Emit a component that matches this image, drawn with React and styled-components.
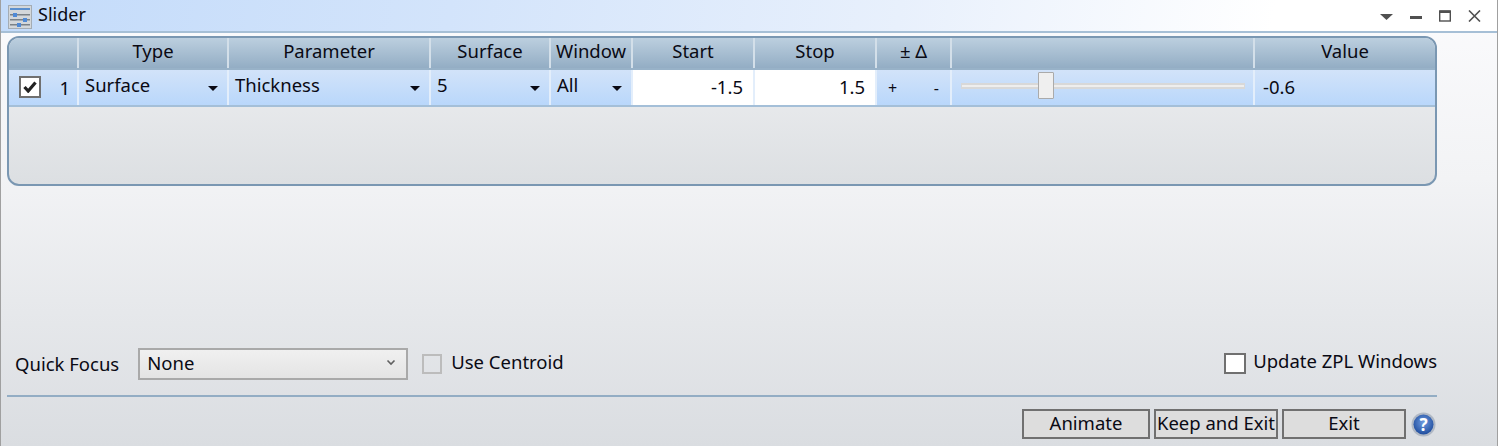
import React from 'react'
import styled, { createGlobalStyle } from 'styled-components'

const GlobalStyle = createGlobalStyle`
  html, body { margin: 0; padding: 0; }
  body { font-family: 'Noto Sans', 'Open Sans', sans-serif; color: #0a0a14; overflow: hidden; }
  * { box-sizing: border-box; }
`

const COLS = '70px 150px 202px 120px 82px 122px 122px 75px 303px 1fr'

const Window = styled.div`
  width: 1498px;
  height: 446px;
  display: flex;
  flex-direction: column;
  border-left: 1px solid #a0a0a0;
  border-right: 1px solid #a0a0a0;
  background: linear-gradient(180deg, #fbfbfd 0%, #f2f3f5 40%, #dadde1 100%);
`

const TitleBar = styled.header`
  height: 33px;
  flex: none;
  display: flex;
  align-items: center;
  padding: 0 16px 2px 7px;
  border-bottom: 2px solid #a6bfd6;
  background: linear-gradient(98deg, #c3dbfa 0%, #d3e4fb 30%, #e8f0fc 60%, #ffffff 85%);
`

const TitleIcon = styled.svg`
  margin-top: 4px;
`

const TitleText = styled.span`
  font-size: 18px;
  margin: 0 0 2px 6px;
  flex: 1;
`

const WinButtons = styled.div`
  display: flex;
  align-items: center;
  gap: 17px;
  margin-top: 3px;
`

const Body = styled.main`
  flex: 1;
  display: flex;
  flex-direction: column;
  padding: 3px 60px 7px 6px;
  min-height: 0;
`

const Panel = styled.section`
  height: 150px;
  flex: none;
  border: 2px solid #7a97b2;
  border-radius: 12px;
  overflow: hidden;
  background: linear-gradient(180deg, #f0f1f3 0%, #dcdfe2 100%);
`

const HeaderRow = styled.div`
  display: grid;
  grid-template-columns: ${COLS};
  height: 32px;
  border-bottom: 2px solid #98b2c8;
  background: linear-gradient(180deg, #bccfdf 0%, #93adc4 100%);
`

const HeaderCell = styled.div`
  font-size: 18.5px;
  line-height: 25px;
  text-align: center;
  white-space: nowrap;
  border-right: 2px solid #d3dfe9;
  &:last-child { border-right: 0; }
`

const DataRow = styled.div`
  display: grid;
  grid-template-columns: ${COLS};
  height: 37px;
  border-bottom: 2px solid #a4bfd8;
  background: linear-gradient(180deg, #d2e3f9 0%, #b9d7fb 100%);
`

const Cell = styled.div`
  display: flex;
  align-items: center;
  font-size: 18.5px;
  white-space: nowrap;
  border-right: 2px solid #e3eefb;
  &:last-child { border-right: 0; }
`

const IndexCell = styled(Cell)`
  padding: 0 7px 1px 10px;
  justify-content: space-between;
`

const DropCell = styled(Cell)`
  justify-content: space-between;
  padding: 0 9px 6px 6px;
`

const Caret = styled.span`
  width: 0;
  height: 0;
  margin-top: 7px;
  border-left: 5px solid transparent;
  border-right: 5px solid transparent;
  border-top: 5px solid #0a0a14;
`

const InputCell = styled(Cell)`
  justify-content: flex-end;
  padding: 0 10px 2px 0;
  background: #fff;
`

const DeltaCell = styled(Cell)`
  justify-content: space-between;
  padding: 0 11px 0 11px;
  font-size: 16px;
`

const SliderCell = styled(Cell)`
  padding: 0 8px 3px 9px;
`

const Track = styled.div`
  position: relative;
  width: 285px;
  height: 6px;
  background: #eeeeee;
  border: 1px solid #d8d8d8;
  border-width: 2px 1px;
`

const Thumb = styled.div`
  position: absolute;
  top: -13px;
  width: 16px;
  height: 27px;
  margin-left: -10px;
  background: #efefef;
  border: 1px solid #aaaaaa;
  border-radius: 1px;
`

const ValueCell = styled(Cell)`
  padding: 0 0 3px 8px;
`

const Spacer = styled.div`
  flex: 1;
`

const FocusRow = styled.div`
  display: flex;
  align-items: center;
  height: 31px;
  padding: 0 0 0 8px;
`

const RowLabel = styled.span`
  font-size: 18.5px;
  margin-right: 19px;
`

const Select = styled.div`
  width: 270px;
  height: 32px;
  display: flex;
  align-items: center;
  justify-content: space-between;
  padding: 0 10px 2px 7px;
  border: 2px solid #a9a9a9;
  font-size: 18.5px;
  background: linear-gradient(180deg, #f0f0f0 0%, #e4e4e4 100%);
`

const CheckLabel = styled.label`
  display: flex;
  align-items: flex-start;
  gap: 9px;
  font-size: 18.5px;
  line-height: 24px;
  color: #0a0a14;
`

const FocusCheck = styled(CheckLabel)`
  margin-left: 14px;
  & > span { margin-top: -4px; }
`

const UpdateCheck = styled(CheckLabel)`
  margin-left: auto;
  gap: 7px;
  & > span { margin-top: -4px; }
`

const Box = styled.div`
  width: ${p => p.$size}px;
  height: ${p => p.$h || p.$size}px;
  flex: none;
  display: flex;
  align-items: center;
  justify-content: center;
  border: 2px solid ${p => (p.$disabled ? '#bcbcbc' : '#707070')};
  background: ${p => (p.$disabled ? 'transparent' : '#fff')};
`

const Divider = styled.hr`
  width: 100%;
  height: 2px;
  border: 0;
  margin: 16px 0 12px;
  background: #93adc4;
`

const ButtonRow = styled.div`
  display: flex;
  justify-content: flex-end;
  align-items: center;
  gap: 4px;
`

const Button = styled.button`
  width: ${p => p.$w}px;
  height: 30px;
  padding: 0 0 2px;
  border: 2px solid #707070;
  background: #dddddd;
  font-family: inherit;
  font-size: 18.5px;
  line-height: 24px;
  white-space: nowrap;
  color: #0a0a14;
`

const HelpIcon = styled.svg`
  margin: 0 1px 0 1px;
`

const SliderIcon = () => (
  <TitleIcon width="24" height="24" viewBox="0 0 24 24">
    <rect x="0.5" y="0.5" width="23" height="23" fill="#d3d7da" stroke="#a4acb4" />
    <rect x="2" y="3" width="20" height="2" fill="#5a8fcf" />
    <rect x="2" y="9" width="20" height="1.5" fill="#7b8288" />
    <rect x="2" y="14" width="20" height="1.5" fill="#7b8288" />
    <rect x="2" y="19" width="20" height="1.5" fill="#7b8288" />
    <rect x="5" y="8" width="4" height="4" fill="#4f8ad6" />
    <rect x="15" y="13" width="4" height="4" fill="#4f8ad6" />
    <rect x="9" y="18" width="4" height="4" fill="#4f8ad6" />
  </TitleIcon>
)

const App = () => {
  const start = -1.5
  const stop = 1.5
  const value = -0.6
  const thumbLeft = ((value - start) / (stop - start)) * 285

  return (
    <Window>
      <GlobalStyle />
      <TitleBar>
        <SliderIcon />
        <TitleText>Slider</TitleText>
        <WinButtons>
          <svg width="13" height="12" viewBox="0 0 13 12"><path d="M0 4h13L6.5 10z" fill="#505050" /></svg>
          <svg width="12" height="12" viewBox="0 0 12 12"><rect x="0" y="6" width="12" height="3" fill="#505050" /></svg>
          <svg width="12" height="12" viewBox="0 0 12 12"><rect x="0.7" y="1" width="10.6" height="10" fill="none" stroke="#505050" strokeWidth="1.4" /><rect x="0.7" y="0.5" width="10.6" height="2.5" fill="#505050" /></svg>
          <svg width="13" height="12" viewBox="0 0 13 12"><path d="M1 .5l11 11M12 .5l-11 11" stroke="#505050" strokeWidth="1.6" /></svg>
        </WinButtons>
      </TitleBar>
      <Body>
        <Panel>
          <HeaderRow>
            <HeaderCell />
            <HeaderCell>Type</HeaderCell>
            <HeaderCell>Parameter</HeaderCell>
            <HeaderCell>Surface</HeaderCell>
            <HeaderCell>Window</HeaderCell>
            <HeaderCell>Start</HeaderCell>
            <HeaderCell>Stop</HeaderCell>
            <HeaderCell>± Δ</HeaderCell>
            <HeaderCell />
            <HeaderCell>Value</HeaderCell>
          </HeaderRow>
          <DataRow>
            <IndexCell>
              <Box $size={22}>
                <svg width="14" height="12" viewBox="0 0 14 12"><path d="M1.5 6l3.7 4 7.3-8.5" fill="none" stroke="#222" strokeWidth="3.2" /></svg>
              </Box>
              <span>1</span>
            </IndexCell>
            <DropCell>Surface<Caret /></DropCell>
            <DropCell>Thickness<Caret /></DropCell>
            <DropCell>5<Caret /></DropCell>
            <DropCell>All<Caret /></DropCell>
            <InputCell>-1.5</InputCell>
            <InputCell>1.5</InputCell>
            <DeltaCell><span>+</span><span>-</span></DeltaCell>
            <SliderCell>
              <Track>
                <Thumb style={{ left: thumbLeft }} />
              </Track>
            </SliderCell>
            <ValueCell>{value}</ValueCell>
          </DataRow>
        </Panel>
        <Spacer />
        <FocusRow>
          <RowLabel>Quick Focus</RowLabel>
          <Select>
            None
            <svg width="10" height="7" viewBox="0 0 10 7"><path d="M1.5 1.5L5 5l3.5-3.5" fill="none" stroke="#606060" strokeWidth="1.6" /></svg>
          </Select>
          <FocusCheck>
            <Box $size={20} $disabled />
            <span>Use Centroid</span>
          </FocusCheck>
          <UpdateCheck>
            <Box $size={22} $h={21} />
            <span>Update ZPL Windows</span>
          </UpdateCheck>
        </FocusRow>
        <Divider />
        <ButtonRow>
          <Button $w={128}>Animate</Button>
          <Button $w={124}>Keep and Exit</Button>
          <Button $w={124}>Exit</Button>
          <HelpIcon width="25" height="25" viewBox="0 0 25 25">
            <defs>
              <radialGradient id="help" cx="50%" cy="40%" r="60%">
                <stop offset="0%" stopColor="#6f9be0" />
                <stop offset="100%" stopColor="#1f4d9e" />
              </radialGradient>
            </defs>
            <circle cx="12.5" cy="12.5" r="12" fill="#b0b8c4" />
            <circle cx="12.5" cy="12.5" r="10" fill="url(#help)" />
            <text x="12.5" y="18.5" textAnchor="middle" fontSize="17" fontWeight="700" fill="#fff">?</text>
          </HelpIcon>
        </ButtonRow>
      </Body>
    </Window>
  )
}

export default App
